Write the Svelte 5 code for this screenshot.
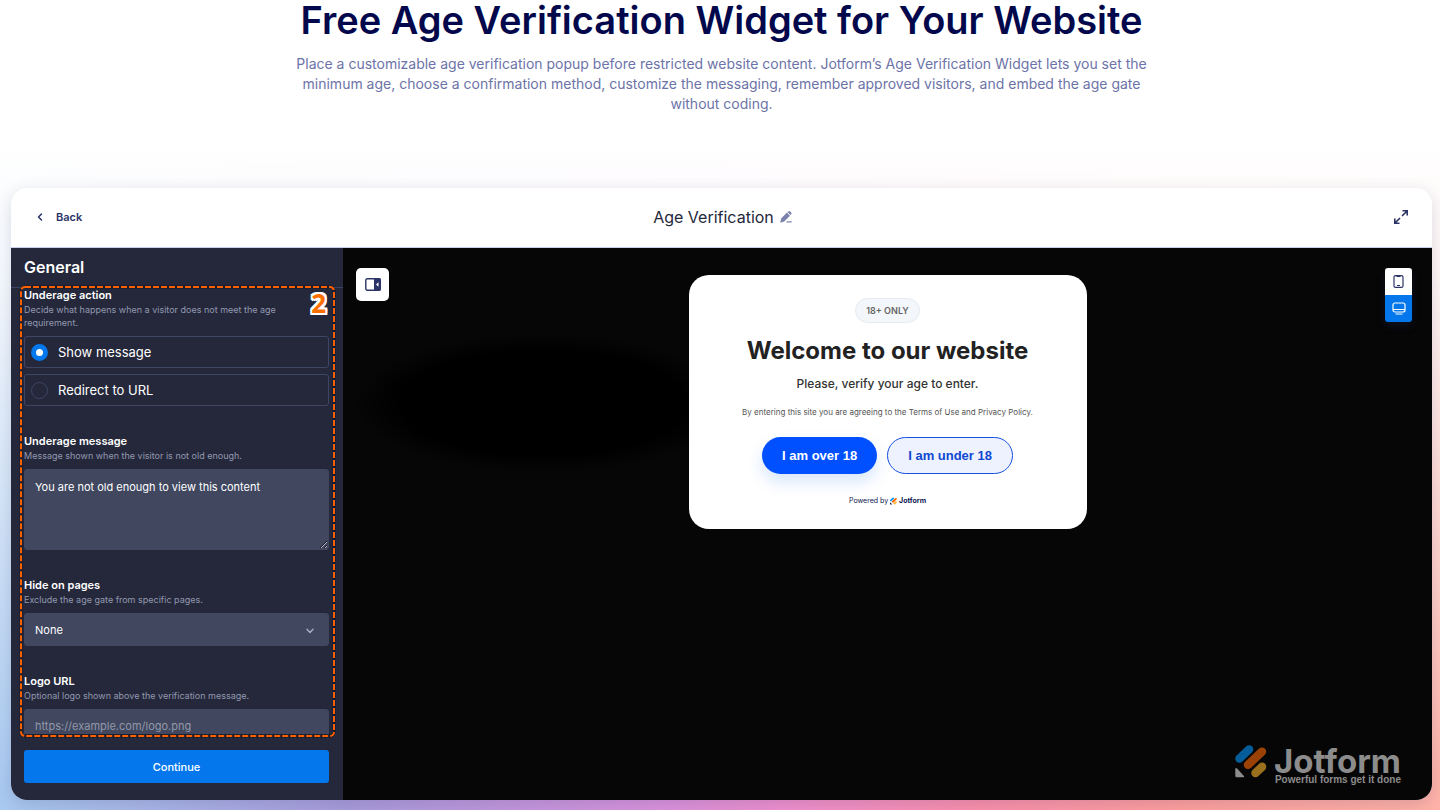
<script lang="ts">
	let underageAction = $state('message');
	let message = $state('You are not old enough to view this content');
	let hideOn = $state('none');
	let logoUrl = $state('');
	let device = $state('desktop');

	const actions = [
		{ value: 'message', label: 'Show message' },
		{ value: 'redirect', label: 'Redirect to URL' },
	];
</script>

{#snippet jotformMark()}
	<svg class="mark" viewBox="0 0 32 33" aria-hidden="true">
		<g fill="none" stroke-width="8.5" stroke-linecap="round">
			<path class="mark-blue" d="M4.500 13.500 14 4.500" />
			<path class="mark-orange" d="M13 19.800 27 6.700" />
			<path class="mark-yellow" d="M20.500 28 27 21.800" />
		</g>
		<path class="mark-corner" d="M.3 24.200v6.500q0 1.500 1.500 1.500h6.500q1.700 0 .6-1.200l-6.800-7.400q-1.800-1.500-1.800.6z" />
	</svg>
{/snippet}

<main class="page">
	<header class="intro">
		<h1>Free Age Verification Widget for Your Website</h1>
		<p>
			Place a customizable age verification popup before restricted website content. Jotform’s Age Verification
			Widget lets you set the minimum age, choose a confirmation method, customize the messaging, remember approved
			visitors, and embed the age gate without coding.
		</p>
	</header>

	<section class="builder">
		<div class="topbar">
			<button class="back" type="button">
				<svg width="8" height="10" viewBox="0 0 8 10" fill="none" stroke="currentColor" stroke-width="1.500" stroke-linecap="round" stroke-linejoin="round">
					<path d="M5.500 2 2.500 5l3 3" />
				</svg>
				Back
			</button>
			<div class="name">
				<h2>Age Verification</h2>
				<button class="icon-button edit" type="button" aria-label="Rename">
					<svg width="12" height="12" viewBox="0 0 12 12" fill="currentColor">
						<path d="M6.900 1.600 10 4.700 4.200 10.500.9 11.600q-.8.1-.6-.7L1.200 7.400z" />
						<path d="M7.500 1 8.300.4q1-.8 2 .1l.9.9q.8.9 0 1.900l-.7.800z" />
						<rect x="6.500" y="10.300" width="5.300" height="1.200" rx=".6" />
					</svg>
				</button>
			</div>
			<button class="icon-button expand" type="button" aria-label="Expand">
				<svg width="16" height="16" viewBox="0 0 16 16" fill="none" stroke="currentColor" stroke-width="1.600">
					<path d="M9.500 1.800h4.700V6.500M14 2 9 7M6.500 14.200H1.800V9.500M2 14l5-5" />
				</svg>
			</button>
		</div>

		<div class="workspace">
			<aside class="sidebar">
				<h3>General</h3>
				<form class="fields">
					<fieldset class="field">
						<legend>Underage action</legend>
						<p class="hint">Decide what happens when a visitor does not meet the age requirement.</p>
						<div class="options">
							{#each actions as action}
								<label class="option">
									<input type="radio" name="action" value={action.value} bind:group={underageAction} />
									{action.label}
								</label>
							{/each}
						</div>
					</fieldset>
					<div class="field">
						<label for="message">Underage message</label>
						<p class="hint">Message shown when the visitor is not old enough.</p>
						<textarea id="message" bind:value={message}></textarea>
					</div>
					<div class="field">
						<label for="hide">Hide on pages</label>
						<p class="hint">Exclude the age gate from specific pages.</p>
						<div class="select-wrap">
							<select id="hide" bind:value={hideOn}>
								<option value="none">None</option>
							</select>
							<svg class="chevron" width="8" height="6" viewBox="0 0 8 6" fill="none" stroke="currentColor" stroke-width="1.400" stroke-linecap="round" stroke-linejoin="round">
								<path d="M1 1.200 4 4.400l3-3.200" />
							</svg>
						</div>
					</div>
					<div class="field">
						<label for="logo">Logo URL</label>
						<p class="hint">Optional logo shown above the verification message.</p>
						<input id="logo" class="text" type="text" placeholder="https://example.com/logo.png" bind:value={logoUrl} />
					</div>
				</form>
				<button class="continue" type="button">Continue</button>

				<svg class="outline" aria-hidden="true">
					<rect class="outline-base" x="1" y="1" rx="4" />
					<rect class="outline-dash" x="1" y="1" rx="4" />
				</svg>
				<span class="step">2</span>
			</aside>

			<div class="preview">
				<button class="panel-toggle" type="button" aria-label="Hide panel">
					<svg width="16" height="13" viewBox="0 0 16 13">
						<rect x=".8" y=".8" width="14.400" height="11.400" rx="1.500" fill="none" stroke="currentColor" stroke-width="1.400" />
						<path d="M9 0h5q2 0 2 2v9q0 2-2 2H9z" fill="currentColor" />
						<path d="M13.500 4.300v4.400L11 6.500z" fill="#fff" />
					</svg>
				</button>

				<article class="gate">
					<span class="pill">18+ ONLY</span>
					<h2>Welcome to our website</h2>
					<p class="lead">Please, verify your age to enter.</p>
					<p class="terms">By entering this site you are agreeing to the Terms of Use and Privacy Policy.</p>
					<div class="answers">
						<button class="over" type="button">I am over 18</button>
						<button class="under" type="button">I am under 18</button>
					</div>
					<p class="powered">Powered by {@render jotformMark()}<b>Jotform</b></p>
				</article>

				<div class="devices">
					<button type="button" class:active={device === 'phone'} aria-label="Phone" onclick={() => (device = 'phone')}>
						<svg width="11" height="13" viewBox="0 0 11 13" fill="none" stroke="currentColor" stroke-width="1.200">
							<rect x="1" y=".6" width="9" height="11.800" rx="1.500" />
							<path d="M3.500 1.500h4M4 10.500h3" />
						</svg>
					</button>
					<button type="button" class:active={device === 'desktop'} aria-label="Desktop" onclick={() => (device = 'desktop')}>
						<svg width="14" height="13" viewBox="0 0 14 13" fill="none" stroke="currentColor" stroke-width="1.200">
							<rect x="1" y="1" width="12" height="9" rx="2" />
							<path d="M1 7.500h12M3.500 12h7" />
						</svg>
					</button>
				</div>

				<div class="watermark">
					{@render jotformMark()}
					<div class="brand">
						<strong>Jotform</strong>
						<span>Powerful forms get it done</span>
					</div>
				</div>
			</div>
		</div>
	</section>
</main>

<style>
	:global(body) {
		margin: 0;
	}

	* {
		box-sizing: border-box;
	}

	h1,
	h2,
	h3,
	p {
		margin: 0;
	}

	button {
		font: inherit;
		border: 0;
		padding: 0;
		cursor: pointer;
	}

	svg {
		flex: none;
	}

	.page {
		display: flex;
		flex-direction: column;
		height: 100vh;
		padding: 0 8px 10px 11px;
		overflow: hidden;
		font-family: Inter, 'Liberation Sans', sans-serif;
		background:
			linear-gradient(#fff 18%, rgba(255, 255, 255, 0.88) 35%, rgba(255, 255, 255, 0) 98%),
			linear-gradient(90deg, #a9caf0 0%, #a99cdb 24%, #d893dd 45%, #f090cc 55%, #fb90ab 68%, #ffa09e 82%, #ffb3a8 100%);
	}

	.intro {
		height: 188px;
		flex: none;
		text-align: center;
	}

	h1 {
		font-size: 38px;
		line-height: 40px;
		font-weight: 600;
		color: #02084b;
	}

	.intro p {
		max-width: 860px;
		margin: 14px auto 0;
		font-size: 14px;
		line-height: 20px;
		color: #6c73a8;
	}

	.builder {
		flex: 1;
		min-height: 0;
		display: flex;
		flex-direction: column;
		border-radius: 16px;
		overflow: hidden;
		background: #fff;
		box-shadow: 0 4px 16px rgba(37, 45, 91, 0.16);
	}

	.topbar {
		display: grid;
		grid-template-columns: 1fr auto 1fr;
		align-items: center;
		height: 60px;
		flex: none;
		padding: 0 23px 1px 25px;
		border-bottom: 1px solid #c8ceed;
	}

	.back {
		display: flex;
		align-items: center;
		gap: 12px;
		justify-self: start;
		background: none;
		font-size: 11px;
		font-weight: 600;
		color: #2c3467;
	}

	.name {
		display: flex;
		align-items: center;
		gap: 6px;
	}

	.name h2 {
		font-size: 16px;
		line-height: 20px;
		font-weight: 400;
		color: #23283a;
	}

	.icon-button {
		display: flex;
		background: none;
	}

	.edit {
		color: #7b82ae;
	}

	.expand {
		justify-self: end;
		color: #2c3467;
	}

	.workspace {
		flex: 1;
		min-height: 0;
		display: flex;
	}

	.sidebar {
		position: relative;
		display: flex;
		flex-direction: column;
		width: 332px;
		flex: none;
		padding-bottom: 17px;
		background: #25283b;
		color: #fff;
	}

	h3 {
		padding: 0 13px;
		border-bottom: 1px solid #3b4463;
		font-size: 16px;
		line-height: 39px;
		font-weight: 600;
	}

	.fields {
		flex: 1;
		min-height: 0;
		overflow: hidden;
		display: flex;
		flex-direction: column;
		gap: 28px;
		margin-bottom: 16px;
		padding: 0 14px 0 13px;
	}

	.field {
		flex: none;
		display: flex;
		flex-direction: column;
		min-width: 0;
		margin: 0;
		border: 0;
		padding: 0;
	}

	.field > label,
	legend {
		padding: 0;
		margin-bottom: 1px;
		font-size: 11px;
		line-height: 14px;
		font-weight: 600;
	}

	.hint {
		margin-bottom: 7px;
		padding-right: 32px;
		font-size: 9px;
		line-height: 13px;
		color: #9298b0;
	}

	.options {
		display: flex;
		flex-direction: column;
		gap: 6px;
	}

	.option {
		display: flex;
		align-items: center;
		gap: 10px;
		height: 32px;
		padding: 0 6px;
		border: 1px solid #3d4665;
		border-radius: 3px;
		font-size: 13px;
	}

	.option input {
		appearance: none;
		width: 17px;
		height: 17px;
		margin: 0;
		border: 1px solid #3d4665;
		border-radius: 50%;
	}

	.option input:checked {
		border: 5px solid #0477ec;
		background: #fff;
	}

	textarea,
	select,
	.text {
		width: 100%;
		margin: 0;
		border: 1px solid #40475f;
		border-radius: 3px;
		padding: 0 10px;
		background: #40475f;
		color: #fff;
		font: 11px / 16px Inter, 'Liberation Sans', sans-serif;
	}

	textarea {
		display: block;
		height: 81px;
		padding: 9px 10px;
		resize: vertical;
	}

	select,
	.text {
		height: 33px;
		appearance: none;
	}

	.text::placeholder {
		color: #9298a8;
	}

	.select-wrap {
		position: relative;
	}

	.chevron {
		position: absolute;
		right: 15px;
		top: 15px;
		color: #aab0c4;
		pointer-events: none;
	}

	.continue {
		height: 33px;
		flex: none;
		margin: 0 14px 0 13px;
		border-radius: 3px;
		background: #0477ec;
		color: #fff;
		font-size: 11px;
		font-weight: 500;
	}

	.outline {
		position: absolute;
		left: 9px;
		top: 38px;
		width: 316px;
		height: calc(100% - 101px);
		overflow: visible;
		pointer-events: none;
	}

	.outline rect {
		width: 313px;
		height: calc(100% - 2px);
		fill: none;
	}

	.outline-base {
		stroke: #16192a;
		stroke-width: 3;
	}

	.outline-dash {
		stroke: #ff6100;
		stroke-width: 2;
		stroke-dasharray: 6 2;
	}

	.step {
		position: absolute;
		right: 17px;
		top: 40px;
		font: 700 26px / 30px 'Open Sans', sans-serif;
		color: #ff6f00;
		text-shadow:
			2px 0 #fff,
			-2px 0 #fff,
			0 2px #fff,
			0 -2px #fff,
			2px 2px #fff,
			-2px 2px #fff,
			2px -2px #fff,
			-2px -2px #fff;
	}

	.preview {
		position: relative;
		flex: 1;
		padding-top: 27px;
		background:
			radial-gradient(ellipse 190px 70px at 200px 155px, #000 75%, rgba(0, 0, 0, 0) 100%),
			#060606;
	}

	.panel-toggle {
		position: absolute;
		left: 13px;
		top: 20px;
		display: grid;
		place-items: center;
		width: 33px;
		height: 33px;
		border-radius: 5px;
		background: #fff;
		color: #2c3467;
	}

	.gate {
		display: flex;
		flex-direction: column;
		align-items: center;
		width: 398px;
		margin: 0 auto;
		padding: 23px 20px;
		border-radius: 20px;
		background: #fff;
		text-align: center;
	}

	.pill {
		padding: 0 10px;
		border: 1px solid #e6ebf0;
		border-radius: 13px;
		background: #f3f7fb;
		font-size: 9px;
		line-height: 23px;
		font-weight: 600;
		color: #666;
	}

	.gate h2 {
		margin-top: 13px;
		font-size: 24px;
		line-height: 30px;
		font-weight: 700;
		color: #222;
	}

	.lead {
		margin-top: 10px;
		font-size: 12px;
		line-height: 16px;
		font-weight: 500;
		color: #333;
	}

	.terms {
		margin-top: 14px;
		font-size: 8px;
		line-height: 12px;
		font-weight: 400;
		color: #555;
	}

	.answers {
		display: flex;
		gap: 10px;
		margin-top: 19px;
	}

	.answers button {
		height: 37px;
		border-radius: 19px;
		padding: 0 20px;
		font: 700 13px / 16px 'Liberation Sans', Arial, sans-serif;
	}

	.over {
		background: #0050ff;
		color: #fff;
		box-shadow: 0 8px 16px rgba(0, 100, 240, 0.16);
	}

	.answers .under {
		border: 1px solid #1550e0;
		background: #eef2fe;
		color: #1048d0;
	}

	.powered {
		display: flex;
		align-items: center;
		gap: 2px;
		margin-top: 22px;
		font-size: 7px;
		line-height: 10px;
		color: #0a1551;
	}

	.mark {
		width: 7px;
		height: 8px;
	}

	.mark-blue {
		stroke: #0099ff;
	}

	.mark-orange {
		stroke: #ff6100;
	}

	.mark-yellow {
		stroke: #ffb629;
	}

	.mark-corner {
		fill: #0a1551;
	}

	.devices {
		position: absolute;
		right: 20px;
		top: 20px;
		display: flex;
		flex-direction: column;
		width: 27px;
		border-radius: 3px;
		overflow: hidden;
		box-shadow: 0 4px 8px rgba(40, 50, 100, 0.25);
	}

	.devices button {
		display: grid;
		place-items: center;
		height: 27px;
		background: #fff;
		color: #2c3467;
	}

	.devices .active {
		background: #0477ec;
		color: #fff;
	}

	.watermark {
		position: absolute;
		right: 31px;
		bottom: 14px;
		display: flex;
		align-items: flex-end;
		gap: 7px;
		color: #8c8c8c;
	}

	.watermark .mark {
		width: 32px;
		height: 33px;
		margin-bottom: 8px;
	}

	.watermark .mark-blue {
		stroke: #045d98;
	}

	.watermark .mark-orange {
		stroke: #9a4206;
	}

	.watermark .mark-yellow {
		stroke: #9a701c;
	}

	.watermark .mark-corner {
		fill: #8c8c8c;
	}

	.brand {
		display: flex;
		flex-direction: column;
		align-items: flex-end;
	}

	.brand strong {
		font-size: 33px;
		line-height: 26px;
		font-weight: 700;
	}

	.brand span {
		font: 700 10px / 12px 'Liberation Sans', Arial, sans-serif;
	}
</style>
